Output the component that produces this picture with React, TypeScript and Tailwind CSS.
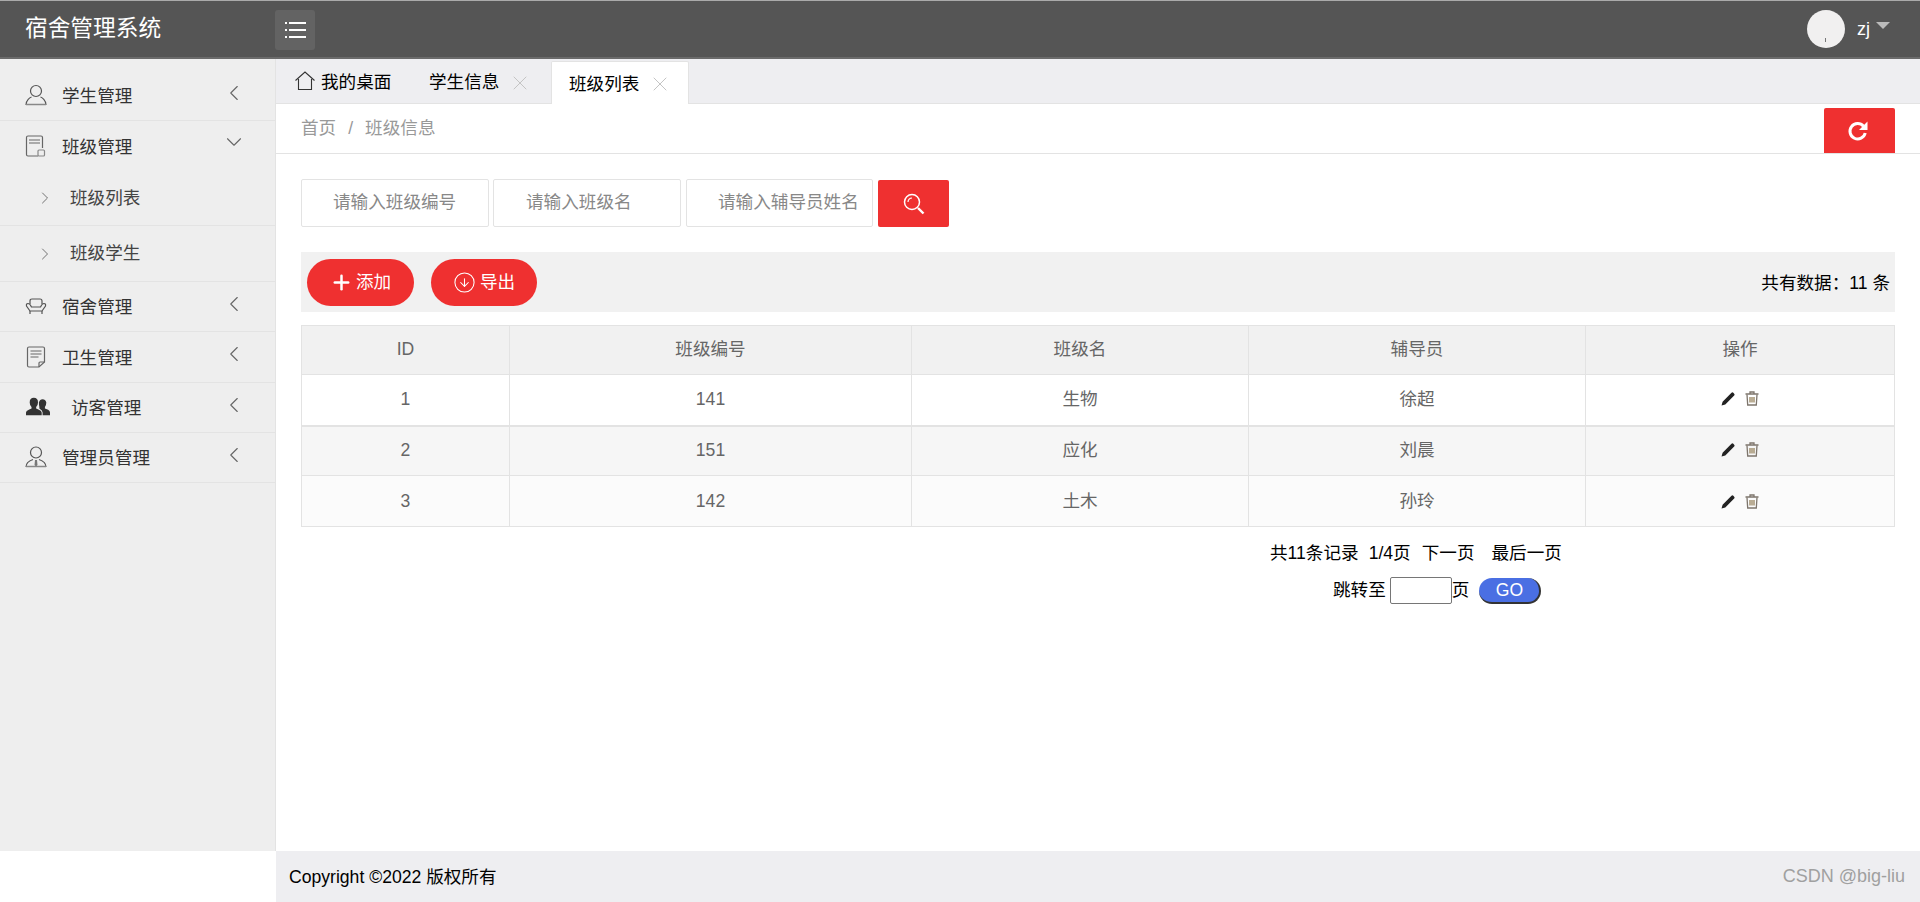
import React from "react";
import { ChevronLeft, ChevronDown, ChevronRight, X, Plus, CircleArrowDown } from "lucide-react";

const font = '"Liberation Sans","Noto Sans CJK SC",sans-serif';

function PersonIcon() {
  return (
    <svg width="22" height="22" viewBox="0 0 22 22" fill="none" stroke="#555" strokeWidth="1.2">
      <circle cx="11" cy="7" r="5.500" />
      <path d="M1 21c0-5 4-7.500 5.500-8M21 21c0-5-4-7.500-5.500-8" />
      <path d="M1 20.500h20" stroke="#888" strokeWidth="1.500" />
    </svg>
  );
}
function ClassIcon() {
  return (
    <svg width="22" height="22" viewBox="0 0 22 22" fill="none" stroke="#666" strokeWidth="1.2">
      <path d="M13 21H3q-1.500 0-1.500-1.500V2.500Q1.500 1 3 1h13q1.500 0 1.500 1.500V13" />
      <path d="M4 5h11M4 8h11" />
      <rect x="13" y="15" width="6.500" height="6" rx="1" stroke="#888" />
    </svg>
  );
}
function SofaIcon() {
  return (
    <svg width="22" height="22" viewBox="0 0 22 22" fill="none" stroke="#555" strokeWidth="1.2">
      <path d="M5 9V6q0-2 2-2h8q2 0 2 2v3" />
      <path d="M5 16 1.500 11Q1 8.500 3 8.500 5 8.500 6.500 12h9Q17 8.500 19 8.500 21 8.500 20.500 11L17 16Z" />
      <path d="M5 16v3M17 16v3" />
    </svg>
  );
}
function NoteIcon() {
  return (
    <svg width="20" height="22" viewBox="0 0 20 22" fill="none" stroke="#666" strokeWidth="1.2">
      <path d="M13 21H3q-1.500 0-1.500-1.500V2.500Q1.500 1 3 1h14q1.500 0 1.500 1.500V16Z" />
      <path d="M4.500 5h11M4.500 8h11M4.500 11h8" />
      <path d="M13 21v-4q0-1 1-1h4.500" />
    </svg>
  );
}
function GroupIcon() {
  return (
    <svg width="26" height="20" viewBox="0 0 26 20" fill="#333" className="translate-x-[2px]">
      <path d="M0 19v-3q0-2 3-3l3-1.500V10Q4 8 4 5q0-5 4.500-5T13 5q0 3-2 5v1.500l3 1.500q3 1 3 3v3Z" />
      <path d="M18 19v-3q0-2.500-3.500-4.500V10Q14 8 14 5q1-3.500 4-3.500T22 5q0 3-1.500 5v1.500L24 13q2 1 2 3v3Z" />
    </svg>
  );
}
function AdminIcon() {
  return (
    <svg width="22" height="22" viewBox="0 0 22 22" fill="none" stroke="#555" strokeWidth="1.2">
      <circle cx="11" cy="6.500" r="5.500" />
      <path d="M1 21c0-5 4-6.500 7-7.500M21 21c0-5-4-6.500-7-7.500" />
      <path d="M1 20.500h20" stroke="#888" strokeWidth="1.500" />
      <path d="M10 14h2l.5 5-1.500 1.500L9.500 19Z" fill="#777" stroke="none" />
    </svg>
  );
}
function HomeIcon() {
  return (
    <svg width="20" height="20" viewBox="0 0 20 20" fill="none" stroke="#333" strokeWidth="1.1">
      <path d="M0.500 9.500 10 1l9.500 8.500" />
      <path d="M3.500 8v10.500h13V8" />
    </svg>
  );
}
function RefreshIcon() {
  return (
    <svg width="22" height="22" viewBox="0 0 22 22" fill="none">
      <path d="M16.500 6.200A7.700 7.700 0 1 0 18.200 13" stroke="#fff" strokeWidth="3" />
      <path d="M20.500 1.500V10H12Z" fill="#fff" />
    </svg>
  );
}
function SearchGlass() {
  return (
    <svg width="22" height="22" viewBox="0 0 22 22" fill="none" stroke="#fff">
      <circle cx="9" cy="9" r="7.500" strokeWidth="1.500" />
      <path d="M5 9a4 4 0 0 1 4-4" strokeWidth="1.200" />
      <path d="M15 15l5.500 5.500" strokeWidth="2.400" />
    </svg>
  );
}

function NavItem({ icon, label, h, open, indent, extra }: { icon: React.ReactNode; label: string; h: string; open?: boolean; indent?: string; extra?: string }) {
  return (
    <div className={`${h} ${extra ?? ""} flex items-center pl-[25px] text-[17.6px] text-[#333] ${open ? "" : "border-b border-[#e3e3e3]"}`}>
      <span className="w-[38px] flex justify-center -ml-[1px] -mt-[1px] shrink-0 pr-[14px]">{icon}</span>
      <span className={`${indent ?? "ml-0"} mt-[2px]`}>{label}</span>
      <span className={`ml-auto mr-[28px] text-[#666] ${open ? "-mt-[8px]" : "-mt-[6px]"}`}>
        {open ? <ChevronDown size={26} strokeWidth={1} /> : <ChevronLeft size={26} strokeWidth={1} />}
      </span>
    </div>
  );
}

function SubItem({ label, h }: { label: string; h: string }) {
  return (
    <div className={`${h} flex items-center pl-[35px] text-[17.6px] text-[#444] border-b border-[#e3e3e3]`}>
      <ChevronRight size={20} strokeWidth={1.1} className="text-[#666] mr-[15px]" />
      <span>{label}</span>
    </div>
  );
}

function PencilIcon() {
  return (
    <svg width="15" height="15" viewBox="0 0 14 14" fill="#222">
      <path d="M0.500 13.500 1.500 10 9.800 1.700a1.200 1.200 0 0 1 1.700 0l.8.800a1.200 1.200 0 0 1 0 1.700L4 12.500Z" />
    </svg>
  );
}
function TrashIcon() {
  return (
    <svg width="16" height="15" viewBox="0 0 15 15" fill="none" stroke="#7d756c" strokeWidth="1.300">
      <path d="M1 3h13M5.500 3V1h4v2" />
      <path d="M2.500 3.500 3.200 14h8.600l.7-10.500" />
      <path d="M5.500 6v5.500M7.500 6v5.500M9.500 6v5.500" stroke="#96825c" />
    </svg>
  );
}

const rows = [
  { id: 1, no: "141", name: "生物", t: "徐超", cls: "bg-white border-b-[2px]", h: "h-[51px]", cell: "pb-[2px]" },
  { id: 2, no: "151", name: "应化", t: "刘晨", cls: "bg-[#f6f6f6]", h: "h-[50px]", cell: "pb-[2px]" },
  { id: 3, no: "142", name: "土木", t: "孙玲", cls: "bg-[#fbfbfb]", h: "h-[51px]", cell: "" },
];

export default function App() {
  return (
    <div className="h-[902px] w-[1920px] overflow-hidden flex flex-col bg-white" style={{ fontFamily: font }}>
      <header className="h-[59px] shrink-0 bg-[#555555] border-t border-[#aaaaaa] border-b-[2px] border-b-[#6b6b6b] flex items-center text-white">
        <div className="w-[275px] pl-[25px] text-[22.7px] leading-none -mt-[1px]">宿舍管理系统</div>
        <button className="mt-[1px] w-[40px] h-[40px] rounded-[3px] bg-[#636363] flex flex-col items-center justify-center gap-[5px]">
          {[0, 1, 2].map((i) => (
            <span key={i} className="flex gap-[2px]">
              <span className="w-[2px] h-[2px] bg-white" />
              <span className="w-[17px] h-[2px] bg-white" />
            </span>
          ))}
        </button>
        <div className="ml-auto flex items-center pr-[30px]">
          <div className="w-[38px] h-[38px] rounded-full bg-[#f1f0f0] relative">
            <span className="absolute left-[18px] top-[28px] w-[1px] h-[4px] bg-[#777]" />
          </div>
          <span className="ml-[12px] text-[18px]">zj</span>
          <span className="ml-[6px] -mt-[8px] w-0 h-0 border-l-[7px] border-r-[7px] border-t-[7px] border-l-transparent border-r-transparent border-t-[#bbbbbb]" />
        </div>
      </header>

      <div className="flex-1 flex min-h-0">
        <aside className="w-[276px] shrink-0 bg-[#eeeeee] border-r border-[#e3e3e3]">
          <NavItem h="h-[62px]" extra="pt-[12px]" icon={<PersonIcon />} label="学生管理" />
          <NavItem h="h-[50px]" open icon={<ClassIcon />} label="班级管理" />
          <SubItem h="h-[55px]" label="班级列表" />
          <SubItem h="h-[56px]" label="班级学生" />
          <NavItem h="h-[50px]" icon={<SofaIcon />} label="宿舍管理" />
          <NavItem h="h-[51px]" icon={<NoteIcon />} label="卫生管理" />
          <NavItem h="h-[50px]" icon={<GroupIcon />} label="访客管理" indent="ml-[9px]" />
          <NavItem h="h-[50px]" icon={<AdminIcon />} label="管理员管理" />
        </aside>

        <main className="flex-1 min-w-0 flex flex-col">
          <div className="h-[45px] shrink-0 bg-[#eeeef1] border-b border-[#e3e3e3] flex items-end text-[17.6px] text-black">
            <div className="h-[44px] flex items-center pl-[19px] w-[132px] gap-[6px] pt-[3px]">
              <span className="-mt-[4px]"><HomeIcon /></span>
              <span>我的桌面</span>
            </div>
            <div className="h-[44px] flex items-center pl-[21px] w-[143px] pt-[3px]">
              <span>学生信息</span>
              <X size={24} strokeWidth={1} className="ml-[9px] text-[#c4c4c4]" />
            </div>
            <div className="h-[43px] -mb-[1px] flex items-center pl-[17px] w-[138px] bg-white border-x border-t border-[#e3e3e3] rounded-t-[2px] pt-[2px]">
              <span>班级列表</span>
              <X size={24} strokeWidth={1} className="ml-[9px] text-[#c4c4c4]" />
            </div>
          </div>

          <div className="h-[50px] shrink-0 border-b border-[#e3e3e3] flex pl-[25px] pr-[25px] text-[17.6px] text-[#999]">
            <div className="flex items-center gap-[10px] -mt-[1px]">
              <span>首页</span>
              <span className="text-[#999] mx-[2px]">/</span>
              <span>班级信息</span>
            </div>
            <button className="ml-auto mt-[4px] w-[71px] h-[45px] bg-[#ef3030] rounded-t-[2px] flex items-center justify-center text-white">
              <span className="-ml-[4px]"><RefreshIcon /></span>
            </button>
          </div>

          <div className="flex-1 pl-[25px] pr-[25px] pt-[25px]">
            <div className="flex items-start text-[17.6px]">
              <div className="w-[188px] h-[48px] border border-[#e3e3e3] rounded-[2px] flex items-center pl-[31px] pb-[1px] text-[#888]">请输入班级编号</div>
              <div className="ml-[4px] w-[188px] h-[48px] border border-[#e3e3e3] rounded-[2px] flex items-center pl-[32px] pb-[1px] text-[#888]">请输入班级名</div>
              <div className="ml-[5px] w-[187px] h-[48px] border border-[#e3e3e3] rounded-[2px] flex items-center pl-[31px] pb-[1px] text-[#888] whitespace-nowrap">请输入辅导员姓名</div>
              <button className="ml-[5px] mt-[1px] w-[71px] h-[47px] rounded-[2px] bg-[#ef3030] flex items-center justify-center text-white">
                <SearchGlass />
              </button>
            </div>

            <div className="mt-[25px] h-[60px] bg-[#f1f1f1] flex items-center pl-[6px] pr-[5px] text-white text-[17.6px]">
              <button className="w-[107px] h-[47px] rounded-full bg-[#ef3030] flex items-center justify-center gap-[3px]">
                <Plus size={23} strokeWidth={2.6} />
                <span>添加</span>
              </button>
              <button className="ml-[17px] w-[106px] h-[47px] rounded-full bg-[#ef3030] flex items-center justify-center gap-[4px]">
                <CircleArrowDown size={23} strokeWidth={1.1} />
                <span>导出</span>
              </button>
              <span className="ml-auto text-black mt-[2px]">共有数据：11 条</span>
            </div>

            <table className="mt-[13px] w-[1593px] border-collapse table-fixed text-[17.6px] text-[#666] text-center">
              <colgroup>
                <col className="w-[208px]" />
                <col className="w-[402px]" />
                <col className="w-[337px]" />
                <col className="w-[337px]" />
                <col className="w-[309px]" />
              </colgroup>
              <thead>
                <tr className="h-[49px] bg-[#f1f1f1]">
                  {["ID", "班级编号", "班级名", "辅导员", "操作"].map((h) => (
                    <th key={h} className="border border-[#e3e3e3] font-normal pb-[1px]">{h}</th>
                  ))}
                </tr>
              </thead>
              <tbody>
                {rows.map((r) => (
                  <tr key={r.id} className={`${r.h} ${r.cls} border-[#e3e3e3]`}>
                    <td className={`border border-[#e3e3e3] ${r.cell}`}>{r.id}</td>
                    <td className={`border border-[#e3e3e3] ${r.cell}`}>{r.no}</td>
                    <td className={`border border-[#e3e3e3] ${r.cell}`}>{r.name}</td>
                    <td className={`border border-[#e3e3e3] ${r.cell}`}>{r.t}</td>
                    <td className={`border border-[#e3e3e3] ${r.cell}`}>
                      <div className="flex items-center justify-center gap-[8px]">
                        <PencilIcon />
                        <TrashIcon />
                      </div>
                    </td>
                  </tr>
                ))}
              </tbody>
            </table>

            <div className="w-[1593px] text-[17.6px] text-black">
              <div className="mt-[14px] h-[24px] flex items-center pl-[969px]">
                <span>共11条记录</span>
                <span className="ml-[10px]">1/4页</span>
                <span className="ml-[11px]">下一页</span>
                <span className="ml-[17px]">最后一页</span>
              </div>
              <div className="mt-[11px] h-[28px] flex items-center pl-[1032px]">
                <span>跳转至</span>
                <span className="ml-[4px] w-[62px] h-[27px] bg-white border border-[#767676] rounded-[2px] block" />
                <span>页</span>
                <button className="ml-[10px] mt-[1px] w-[62px] h-[26px] rounded-full bg-[#4a6fe3] text-white border-b-[2px] border-r-[2px] border-[#333] text-[17.6px] leading-none flex items-center justify-center pt-[2px]">GO</button>
              </div>
            </div>
          </div>
        </main>
      </div>

      <div className="h-[51px] shrink-0 flex">
        <div className="w-[276px] shrink-0 bg-white" />
        <footer className="flex-1 bg-[#eeeef1] flex items-center justify-between pl-[13px] pr-[15px] text-[17.6px] text-black">
          <span className="mt-[1px]">Copyright ©2022 版权所有</span>
          <span className="text-[#a0a0a0] text-[18px]">CSDN @big-liu</span>
        </footer>
      </div>
    </div>
  );
}
